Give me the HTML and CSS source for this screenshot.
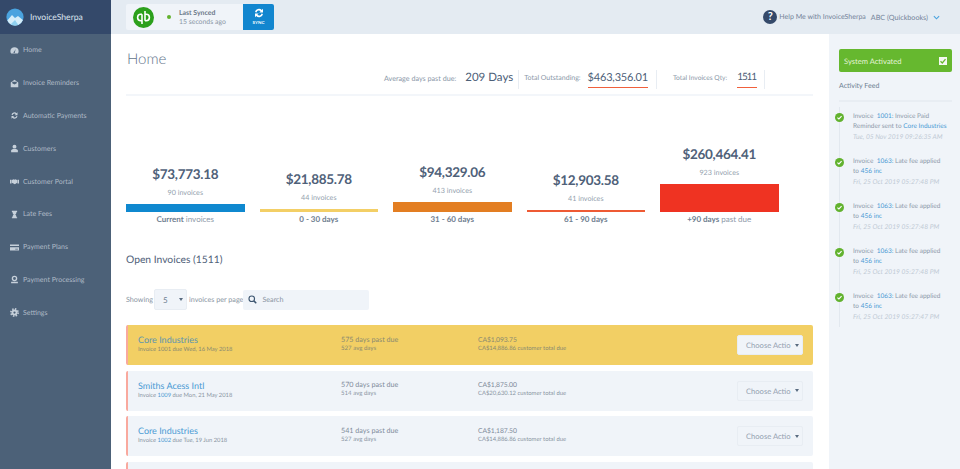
FILE: index.html
```html
<!DOCTYPE html>
<html lang="en">
<head>
<meta charset="utf-8">
<title>InvoiceSherpa</title>
<link rel="stylesheet" href="styles.css">
</head>
<body>
<div class="app">
  <aside class="sidebar">
    <div class="brand">
      <svg class="brand-logo" viewBox="0 0 18 18"><defs><clipPath id="c"><circle cx="9" cy="9" r="8.6"/></clipPath></defs><circle cx="9" cy="9" r="8.6" fill="#4aa3df"/><g clip-path="url(#c)"><path d="M0 14 L6 7 L9 10 L12 8 L18 13 V18 H0Z" fill="#d5edf9"/><path d="M3 18 L9 12 L13 18Z" fill="#8fd0ef"/></g></svg>
      <span>InvoiceSherpa</span>
    </div>
    <nav class="nav">
      <a class="nav-item"><svg viewBox="0 0 12 12"><path d="M6 1.500a5.500 5.500 0 0 0-5.500 5.500c0 1.200.4 2.200 1 3h9c.6-.8 1-1.800 1-3A5.500 5.500 0 0 0 6 1.500Zm.6 6.600a1 1 0 1 1-1.200-.6L7.500 4Z"/></svg>Home</a>
      <a class="nav-item"><svg viewBox="0 0 12 12"><path d="M1 4.500 6 1l5 3.500V11H1ZM3 3.500v2L6 7.300l3-1.800v-2Z"/></svg>Invoice Reminders</a>
      <a class="nav-item"><svg viewBox="0 0 12 12"><path d="M2 5a4 4 0 0 1 6.800-2L10 1.800V5.500H6.300l1.300-1.300A2.400 2.400 0 0 0 3.500 5.500ZM10 7a4 4 0 0 1-6.800 2L2 10.200V6.500h3.700L4.400 7.800A2.400 2.400 0 0 0 8.500 6.500Z"/></svg>Automatic Payments</a>
      <a class="nav-item"><svg viewBox="0 0 12 12"><circle cx="6" cy="3.500" r="2.600"/><path d="M1.500 11V8.500C1.500 7.300 3 6.500 6 6.500s4.500.8 4.500 2V11Z"/></svg>Customers</a>
      <a class="nav-item"><svg viewBox="0 0 12 12"><path d="M0 3.500h2v5H0ZM10 3.500h2v5h-2ZM2.500 4 5 3l1 .5L7 3l2.500 1v3.800L6.500 9.500 2.500 7.800Z"/></svg>Customer Portal</a>
      <a class="nav-item"><svg viewBox="0 0 12 12"><path d="M2.500 1h7v1.500h-.8c0 2-1 3-1.900 3.500.9.500 1.900 1.500 1.900 3.500h.8V11h-7V9.500h.8c0-2 1-3 1.900-3.500C4.300 5.500 3.300 4.500 3.300 2.500h-.8Z"/></svg>Late Fees</a>
      <a class="nav-item"><svg viewBox="0 0 12 12"><path d="M0 2h12v2H0ZM0 5.500h12V10H0Zm7 2v1h3.500v-1Z"/></svg>Payment Plans</a>
      <a class="nav-item"><svg viewBox="0 0 12 12"><path fill-rule="evenodd" d="M6 1a3.700 3.700 0 1 1 0 7.400A3.700 3.700 0 0 1 6 1Zm0 1.800a1.900 1.900 0 1 0 0 3.800 1.900 1.900 0 0 0 0-3.800ZM1.500 9h9v2h-9Z"/></svg>Payment Processing</a>
      <a class="nav-item"><svg viewBox="0 0 12 12"><circle class="gear-teeth" cx="6" cy="6" r="4.800"/><path fill-rule="evenodd" d="M6 2a4 4 0 1 1 0 8 4 4 0 0 1 0-8Zm0 2.500a1.500 1.500 0 1 0 0 3 1.500 1.500 0 0 0 0-3Z"/></svg>Settings</a>
    </nav>
  </aside>
  <div class="workspace">
    <header class="topbar">
      <div class="sync-card">
        <svg class="qb-logo" viewBox="0 0 21 21"><circle cx="10.500" cy="10.500" r="10.500" fill="#2ca01c"/><path d="M9 7.300V17M12 4v9.700M9 7.300H7.800a3.200 3.200 0 0 0 0 6.400H9M12 7.300h1.200a3.200 3.200 0 0 1 0 6.400H12" fill="none" stroke="#fff" stroke-width="1.600"/></svg>
        <span class="sync-dot"></span>
        <div class="sync-text"><strong>Last Synced</strong><span>15 seconds ago</span></div>
        <button class="sync-btn"><svg viewBox="0 0 12 12"><path d="M2 5a4 4 0 0 1 6.800-2L10 1.800V5.500H6.300l1.300-1.300A2.400 2.400 0 0 0 3.500 5.500ZM10 7a4 4 0 0 1-6.800 2L2 10.200V6.500h3.700L4.400 7.800A2.400 2.400 0 0 0 8.500 6.500Z"/></svg><span>SYNC</span></button>
      </div>
      <div class="top-right">
        <span class="help-icon">?</span>
        <span>Help Me with InvoiceSherpa</span>
        <span class="account">ABC (Quickbooks)</span>
        <svg class="chev" viewBox="0 0 8 5"><path d="M1 1l3 3 3-3" fill="none" stroke="#4aa3df" stroke-width="1.300"/></svg>
      </div>
    </header>
    <div class="content">
      <main class="main">
        <h1 class="title">Home</h1>
        <div class="stats">
          <div class="stat first"><span class="stat-label">Average days past due:</span><span class="stat-value">209 Days</span></div>
          <div class="stat second"><span class="stat-label">Total Outstanding:</span><span class="stat-value line">$463,356.01</span></div>
          <div class="stat third"><span class="stat-label">Total Invoices Qty:</span><span class="stat-value line">1511</span></div>
        </div>
        <section class="chart">
          <div class="col"><div class="amount">$73,773.18</div><div class="count">90 invoices</div><div class="bar blue"></div><div class="cap"><b>Current</b> invoices</div></div>
          <div class="col"><div class="amount">$21,885.78</div><div class="count">44 invoices</div><div class="bar yellow"></div><div class="cap"><b>0 - 30 days</b></div></div>
          <div class="col"><div class="amount">$94,329.06</div><div class="count">413 invoices</div><div class="bar orange"></div><div class="cap"><b>31 - 60 days</b></div></div>
          <div class="col"><div class="amount">$12,903.58</div><div class="count">41 invoices</div><div class="bar thin"></div><div class="cap"><b>61 - 90 days</b></div></div>
          <div class="col"><div class="amount">$260,464.41</div><div class="count">923 invoices</div><div class="bar red"></div><div class="cap"><b>+90 days</b> past due</div></div>
        </section>
        <h2 class="section-title">Open Invoices (1511)</h2>
        <div class="filters">
          <span>Showing</span>
          <div class="page-select"><span>5</span><i class="caret"></i></div>
          <span>invoices per page</span>
          <div class="search"><svg viewBox="0 0 12 12"><circle cx="5" cy="5" r="3.700" fill="none" stroke="#3d5670" stroke-width="1.500"/><path d="M7.800 7.800 11 11" stroke="#3d5670" stroke-width="2"/></svg><span>Search</span></div>
        </div>
        <div class="rows">
          <article class="row hot">
            <div class="c1"><a class="name">Core Industries</a><div class="sub">Invoice <span class="num">1001</span> due Wed, 16 May 2018</div></div>
            <div class="c2"><div class="big">575 days past due</div><div class="sub">527 avg days</div></div>
            <div class="c3"><div class="big">CA$1,093.75</div><div class="sub">CA$14,886.86 customer total due</div></div>
            <div class="action"><span>Choose Actio</span><i class="caret"></i></div>
          </article>
          <article class="row">
            <div class="c1"><a class="name">Smiths Acess Intl</a><div class="sub">Invoice <a class="link">1009</a> due Mon, 21 May 2018</div></div>
            <div class="c2"><div class="big">570 days past due</div><div class="sub">514 avg days</div></div>
            <div class="c3"><div class="big">CA$1,875.00</div><div class="sub">CA$20,630.12 customer total due</div></div>
            <div class="action"><span>Choose Actio</span><i class="caret"></i></div>
          </article>
          <article class="row">
            <div class="c1"><a class="name">Core Industries</a><div class="sub">Invoice <a class="link">1002</a> due Tue, 19 Jun 2018</div></div>
            <div class="c2"><div class="big">541 days past due</div><div class="sub">527 avg days</div></div>
            <div class="c3"><div class="big">CA$1,187.50</div><div class="sub">CA$14,886.86 customer total due</div></div>
            <div class="action"><span>Choose Actio</span><i class="caret"></i></div>
          </article>
          <article class="row"></article>
        </div>
      </main>
      <aside class="panel">
        <div class="activated"><span>System Activated</span><span class="check-box"><svg viewBox="0 0 8 8"><path d="M1.500 4.200 3.300 6 6.500 2.200" fill="none" stroke="#6aba2f" stroke-width="1.300"/></svg></span></div>
        <div class="feed-title">Activity Feed</div>
        <ul class="feed">
          <li class="event"><svg class="tick" viewBox="0 0 9 9"><circle cx="4.500" cy="4.500" r="4.500" fill="#62b22f"/><path d="M2.400 4.600 3.900 6 6.600 3.200" fill="none" stroke="#fff" stroke-width="1.100"/></svg><p>Invoice &nbsp;<a class="link">1001:</a> Invoice Paid<br>Reminder sent to <a class="link">Core Industries</a></p><time>Tue, 05 Nov 2019 09:26:35 AM</time></li>
          <li class="event"><svg class="tick" viewBox="0 0 9 9"><circle cx="4.500" cy="4.500" r="4.500" fill="#62b22f"/><path d="M2.400 4.600 3.900 6 6.600 3.200" fill="none" stroke="#fff" stroke-width="1.100"/></svg><p>Invoice &nbsp;<a class="link">1063:</a> Late fee applied<br>to <a class="link">456 inc</a></p><time>Fri, 25 Oct 2019 05:27:48 PM</time></li>
          <li class="event"><svg class="tick" viewBox="0 0 9 9"><circle cx="4.500" cy="4.500" r="4.500" fill="#62b22f"/><path d="M2.400 4.600 3.900 6 6.600 3.200" fill="none" stroke="#fff" stroke-width="1.100"/></svg><p>Invoice &nbsp;<a class="link">1063:</a> Late fee applied<br>to <a class="link">456 inc</a></p><time>Fri, 25 Oct 2019 05:27:48 PM</time></li>
          <li class="event"><svg class="tick" viewBox="0 0 9 9"><circle cx="4.500" cy="4.500" r="4.500" fill="#62b22f"/><path d="M2.400 4.600 3.900 6 6.600 3.200" fill="none" stroke="#fff" stroke-width="1.100"/></svg><p>Invoice &nbsp;<a class="link">1063:</a> Late fee applied<br>to <a class="link">456 inc</a></p><time>Fri, 25 Oct 2019 05:27:48 PM</time></li>
          <li class="event"><svg class="tick" viewBox="0 0 9 9"><circle cx="4.500" cy="4.500" r="4.500" fill="#62b22f"/><path d="M2.400 4.600 3.900 6 6.600 3.200" fill="none" stroke="#fff" stroke-width="1.100"/></svg><p>Invoice &nbsp;<a class="link">1063:</a> Late fee applied<br>to <a class="link">456 inc</a></p><time>Fri, 25 Oct 2019 05:27:47 PM</time></li>
        </ul>
      </aside>
    </div>
  </div>
</div>
</body>
</html>
```
FILE: styles.css
```css
* { box-sizing: border-box; }
html, body { margin: 0; height: 469px; overflow: hidden; }
body { font-family: "Lato", "Open Sans", sans-serif; color: #7d8a9c; background: #fff; text-rendering: geometricPrecision; }
a { text-decoration: none; }
.link { color: #4a9ad4; }

.app { display: flex; width: 960px; height: 469px; overflow: hidden; }

.sidebar { width: 111px; flex: none; background: #4c6178; }
.brand { height: 34px; background: #34496a; display: flex; align-items: center; padding-left: 6px; gap: 6px; color: #dbe4ee; font-size: 8.600px; }
.brand-logo { width: 18px; height: 18px; }
.nav { display: flex; flex-direction: column; }
.nav-item { height: 32.800px; display: flex; align-items: center; gap: 4px; padding-left: 10px; font-size: 7px; color: #aeb9c6; }
.nav-item svg { width: 9px; height: 9px; fill: #c6d0da; flex: none; }
.gear-teeth { fill: none; stroke: #c6d0da; stroke-width: 2.200; stroke-dasharray: 2 1.770; }

.workspace { flex: 1; display: flex; flex-direction: column; min-width: 0; }
.topbar { height: 34px; flex: none; background: #e4ebf2; display: flex; align-items: flex-start; justify-content: space-between; padding: 4px 20px 0 15px; }
.sync-card { width: 148px; height: 26px; background: #f0f4f9; border-radius: 2px; display: flex; align-items: center; padding-left: 7px; }
.qb-logo { width: 21px; height: 21px; flex: none; }
.sync-dot { width: 4px; height: 4px; border-radius: 50%; background: #62b22f; margin-left: 13px; flex: none; }
.sync-text { display: flex; flex-direction: column; margin-left: 8px; padding-top: 2px; font-size: 6.900px; line-height: 9px; flex: 1; color: #8b97a6; }
.sync-text strong { color: #6b7888; font-weight: 700; }
.sync-btn { width: 31px; height: 26px; background: #1286cf; border: 0; border-radius: 0 2px 2px 0; color: #fff; font: 700 4.500px "Lato", sans-serif; padding: 3px 0 0; display: flex; flex-direction: column; align-items: center; gap: 1px; }
.sync-btn svg { width: 12px; height: 12px; fill: #fff; }

.top-right { display: flex; align-items: center; height: 24px; margin-top: 1px; font-size: 7px; color: #74849a; }
.help-icon { width: 14px; height: 14px; border-radius: 50%; background: #34496a; color: #fff; font: 700 11px/14px "Lato", sans-serif; text-align: center; margin-right: 2px; }
.account { margin-left: 5px; font-size: 7.200px; }
.chev { width: 7px; height: 5px; margin-left: 5px; }

.content { flex: 1; display: flex; min-height: 0; }
.main { width: 718px; flex: none; padding: 0 16px 0 15px; background: #fff; }
.title { margin: 15px 0 0; padding-left: 1px; font-size: 15px; line-height: 20px; font-weight: 300; color: #62738a; }

.stats { display: flex; justify-content: flex-end; height: 27px; padding: 1px 48px 0 0; border-bottom: 2px solid #f3f6fa; align-items: flex-start; }
.stat { display: flex; align-items: flex-start; height: 19px; border-right: 1px solid #e8edf3; font-size: 7.200px; }
.stat-label { color: #8a97a8; line-height: 17px; }
.stat-value { font-size: 11.500px; line-height: 15px; color: #4d6078; margin-left: 7px; }
.stat-value.line { border-bottom: 1px solid #f0603c; height: 18px; }
.first { padding-right: 5px; margin-right: 5px; }
.first .stat-value { margin-left: 9px; }
.second { padding-right: 8px; margin-right: 16px; }
.second .stat-label { font-size: 7px; }
.second .stat-value { font-size: 11px; letter-spacing: -.2px; }
.third { padding-right: 7px; }
.third .stat-label { font-size: 6.700px; }
.third .stat-value { font-size: 10px; letter-spacing: -1.100px; margin-left: 10px; padding-right: 1px; }

.chart { display: grid; grid-template-columns: repeat(5, 118.500px); column-gap: 15px; align-items: end; height: 128px; }
.col { display: flex; flex-direction: column; align-items: stretch; text-align: center; }
.amount { font-size: 13.500px; line-height: 18px; font-weight: 700; letter-spacing: -.3px; color: #4f6179; }
.count { font-size: 7.200px; line-height: 10px; color: #949fae; margin: 5px 0 6px; }
.cap { font-size: 8px; line-height: 10px; color: #8d99a9; padding-top: 1px; }
.cap b { font-weight: 700; color: #6f7e90; }
.bar { margin-bottom: 1px; }
.bar.blue { height: 8px; background: #0f88cf; }
.bar.yellow { height: 3px; background: #f3cf66; }
.bar.orange { height: 10px; background: #e37e22; }
.bar.thin { height: 2px; background: #ee5a34; }
.bar.red { height: 28px; background: #ef3322; }

.section-title { margin: 29px 0 0; font-size: 10.300px; line-height: 14px; font-weight: 400; color: #4f6179; }
.filters { display: flex; align-items: center; height: 21px; margin-top: 22px; font-size: 7.200px; color: #8a95a3; }
.page-select { width: 33px; height: 21px; background: #f0f4f9; border: 1px solid #e8edf3; border-radius: 2px; margin: 0 2px 0 1px; display: flex; align-items: center; justify-content: space-between; padding: 0 3px 0 8px; font-size: 8px; color: #6e7f92; }
.search { width: 126px; height: 20px; background: #f0f4f9; border-radius: 2px; display: flex; align-items: center; padding-left: 5px; gap: 5px; color: #8a95a3; }
.search svg { width: 9px; height: 9px; }
.caret { width: 0; height: 0; border-left: 2px solid transparent; border-right: 2px solid transparent; border-top: 3px solid #596b80; flex: none; }

.rows { display: flex; flex-direction: column; gap: 5.500px; margin-top: 15px; }
.row { height: 40px; flex: none; background: #f0f4f9; border-left: 2px solid #f9a99e; border-radius: 2px; display: flex; align-items: center; width: 687px; }
.row.hot { background: #f2cf64; }
.c1 { width: 213px; padding: 0 0 2px 10px; }
.c1 .sub { font-size: 5.800px; margin-top: 1px; }
.c2 { width: 137px; padding-bottom: 3px; }
.c3 { flex: 1; padding-bottom: 3px; }
.name { display: block; font-size: 9px; line-height: 11px; color: #4a9ad4; }
.row.hot .name { color: #5a93b0; }
.big { font-size: 7.200px; line-height: 10px; color: #7f8b99; }
.c3 .big { font-size: 6.800px; letter-spacing: -.1px; }
.sub { font-size: 6.100px; line-height: 8px; color: #8a95a3; }
.c3 .sub { font-size: 5.900px; }
.row.hot .sub, .row.hot .big { color: #8a8a70; }
.action { width: 66px; height: 20px; margin-right: 10px; background: #f0f4f9; border: 1px solid #e8edf3; border-radius: 2px; display: flex; align-items: center; justify-content: space-between; padding: 0 3px 0 8px; font-size: 7.600px; color: #94a1b0; }

.panel { width: 131px; flex: none; background: #f0f4f9; padding: 15px 8px 0 10px; }
.activated { height: 23px; background: #66b82f; border-radius: 2px; color: #e4f3d6; font-size: 7.600px; display: flex; align-items: center; justify-content: space-between; padding: 0 5px; }
.check-box { width: 8px; height: 8px; background: #f5f8f2; display: flex; }
.check-box svg { width: 8px; height: 8px; }
.feed-title { margin-top: 9px; font-size: 7px; line-height: 10px; color: #6e7f92; padding-bottom: 9px; border-bottom: 2px solid #e8edf3; }
.feed { list-style: none; margin: 0; padding: 0 0 0 14px; position: relative; }
.feed::before { content: ""; position: absolute; left: 0; top: 5px; bottom: 0; width: 1px; background: #e2e8ef; }
.event { position: relative; height: 45px; padding-top: 10px; font-size: 6.500px; line-height: 10px; color: #8d99a9; white-space: nowrap; }
.event p { margin: 0; }
.event time { display: block; font-style: italic; color: #c0cad5; font-size: 6.700px; }
.tick { position: absolute; left: -18px; top: 10.500px; width: 9px; height: 9px; }
```
